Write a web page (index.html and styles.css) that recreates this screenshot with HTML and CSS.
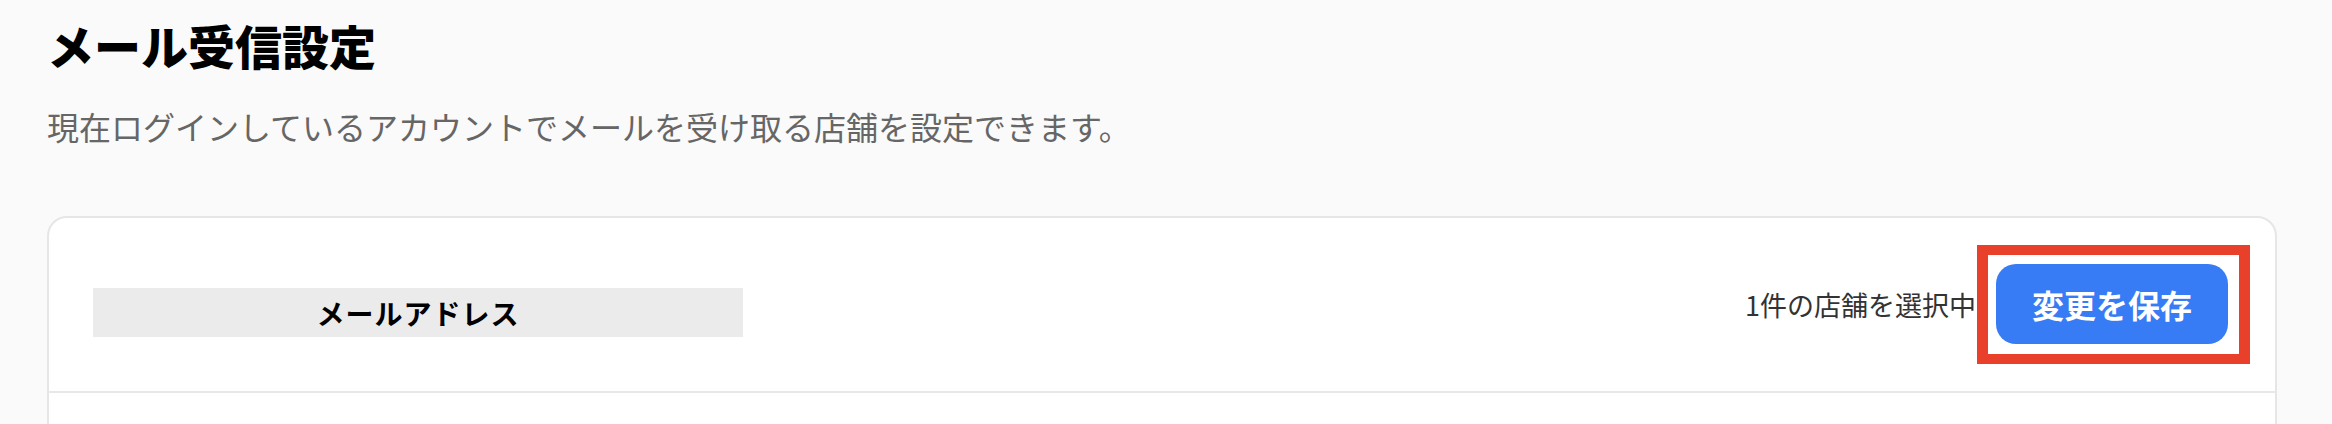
FILE: index.html
```html
<!DOCTYPE html>
<html lang="ja">
<head>
<meta charset="utf-8">
<title>メール受信設定</title>
<link rel="stylesheet" href="styles.css">
</head>
<body>
<main class="page">
  <h1 class="title">メール受信設定</h1>
  <p class="subtitle">現在ログインしているアカウントでメールを受け取る店舗を設定できます。</p>
  <section class="card">
    <div class="card-header">
      <div class="col-label">メールアドレス</div>
      <div class="actions">
        <span class="count">1件の店舗を選択中</span>
        <span class="highlight">
          <button class="save-btn" type="button">変更を保存</button>
        </span>
      </div>
    </div>
    <div class="card-body"></div>
  </section>
</main>
</body>
</html>
```
FILE: styles.css
```css
html, body {
  margin: 0;
  padding: 0;
  background: #fafafa;
}
body {
  font-family: "Noto Sans CJK JP", "Noto Sans", sans-serif;
  color: #000;
  overflow: hidden;
}
.page {
  padding: 17px 55px 0 47px;
}
.title {
  margin: 0;
  font-size: 47px;
  line-height: 56px;
  font-weight: 900;
  color: #000;
}
.subtitle {
  margin: 33px 0 0;
  font-size: 32px;
  line-height: 40px;
  color: #666;
  font-weight: 400;
}
.card {
  margin-top: 70px;
  background: #fff;
  border: 2px solid #e6e6e6;
  border-radius: 20px;
}
.card-header {
  height: 173px;
  display: flex;
  align-items: center;
  padding: 0 25px 0 44px;
  border-bottom: 2px solid #e8e8e8;
}
.col-label {
  width: 650px;
  height: 49px;
  margin-top: 16px;
  background: #ebebeb;
  display: flex;
  align-items: center;
  justify-content: center;
  font-size: 28px;
  font-weight: 700;
  letter-spacing: 1px;
  color: #000;
}
.actions {
  margin-left: auto;
  display: flex;
  align-items: center;
  gap: 1px;
}
.count {
  font-size: 27px;
  color: #333;
}
.highlight {
  display: flex;
  border-style: solid;
  border-color: #e8402a;
  border-width: 10px 11px;
  padding: 9px 11px 10px 8px;
}
.save-btn {
  width: 232px;
  height: 80px;
  border: none;
  border-radius: 20px;
  background: #377cf4;
  color: #fff;
  font-family: "Noto Sans CJK JP", "Noto Sans", sans-serif;
  font-size: 32px;
  font-weight: 700;
  padding: 0;
}
.card-body {
  height: 120px;
}
```
